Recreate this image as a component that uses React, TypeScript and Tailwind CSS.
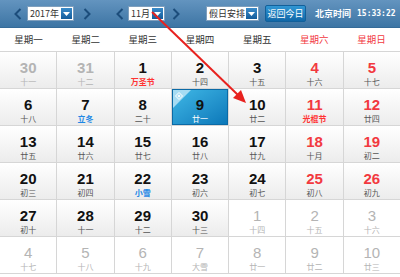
type Day = {
  n: number;
  sub: string;
  kind?: "fest" | "term";
  other?: "prev" | "next";
  sel?: boolean;
};

const ROWS: Day[][] = [
  [
    { n: 30, sub: "十一", other: "prev" },
    { n: 31, sub: "十二", other: "prev" },
    { n: 1, sub: "万圣节", kind: "fest" },
    { n: 2, sub: "十四" },
    { n: 3, sub: "十五" },
    { n: 4, sub: "十六" },
    { n: 5, sub: "十七" },
  ],
  [
    { n: 6, sub: "十八" },
    { n: 7, sub: "立冬", kind: "term" },
    { n: 8, sub: "二十" },
    { n: 9, sub: "廿一", sel: true },
    { n: 10, sub: "廿二" },
    { n: 11, sub: "光棍节", kind: "fest" },
    { n: 12, sub: "廿四" },
  ],
  [
    { n: 13, sub: "廿五" },
    { n: 14, sub: "廿六" },
    { n: 15, sub: "廿七" },
    { n: 16, sub: "廿八" },
    { n: 17, sub: "廿九" },
    { n: 18, sub: "十月" },
    { n: 19, sub: "初二" },
  ],
  [
    { n: 20, sub: "初三" },
    { n: 21, sub: "初四" },
    { n: 22, sub: "小雪", kind: "term" },
    { n: 23, sub: "初六" },
    { n: 24, sub: "初七" },
    { n: 25, sub: "初八" },
    { n: 26, sub: "初九" },
  ],
  [
    { n: 27, sub: "初十" },
    { n: 28, sub: "十一" },
    { n: 29, sub: "十二" },
    { n: 30, sub: "十三" },
    { n: 1, sub: "十四", other: "next" },
    { n: 2, sub: "十五", other: "next" },
    { n: 3, sub: "十六", other: "next" },
  ],
  [
    { n: 4, sub: "十七", other: "next" },
    { n: 5, sub: "十八", other: "next" },
    { n: 6, sub: "十九", other: "next" },
    { n: 7, sub: "大雪", other: "next" },
    { n: 8, sub: "廿一", other: "next" },
    { n: 9, sub: "廿二", other: "next" },
    { n: 10, sub: "廿三", other: "next" },
  ],
];

const WEEK = ["星期一", "星期二", "星期三", "星期四", "星期五", "星期六", "星期日"];

const CJK = { fontFamily: '"Noto Sans CJK SC", "Liberation Sans", sans-serif' };

function Chevron({ dir }: { dir: "l" | "r" }) {
  return (
    <svg width="8" height="12" viewBox="0 0 8 12" className="shrink-0">
      <polyline
        points={dir === "l" ? "6.5,1 1.5,6 6.5,11" : "1.5,1 6.5,6 1.5,11"}
        fill="none"
        stroke="#1c4d7b"
        strokeWidth="2"
      />
    </svg>
  );
}

function Select({ label, w }: { label: string; w: string }) {
  return (
    <div className={`flex h-[15px] ${w} shrink-0 items-stretch border border-[#7f9fbd] bg-white`}>
      <div className="flex flex-1 items-center whitespace-nowrap pl-[2px] text-[9px] leading-none text-[#333]">
        {label}
      </div>
      <div className="flex w-[13px] shrink-0 items-center justify-center border border-white bg-gradient-to-b from-[#3a8cca] to-[#135c9b]">
        <svg width="7" height="4" viewBox="0 0 7 4">
          <polygon points="0,0 7,0 3.5,4" fill="#fff" />
        </svg>
      </div>
    </div>
  );
}

function Cell({ d, col }: { d: Day; col: number }) {
  const weekend = col >= 5;
  let numColor = "text-[#111]";
  if (d.other) numColor = "text-[#b4b4b4]";
  else if (weekend) numColor = "text-[#f2393f]";

  let subColor = "text-[#555]";
  if (d.other) subColor = "text-[#b4b4b4]";
  else if (d.kind === "fest") subColor = "text-[#f33] font-bold";
  else if (d.kind === "term") subColor = "text-[#1e88e5] font-bold";

  if (d.sel) {
    return (
      <div className="relative flex h-[36px] flex-col items-center overflow-hidden border border-[#0b6aa6] bg-gradient-to-br from-[#3fb8e6] to-[#0a78b9] pt-[7px]">
        <div className="absolute left-0 top-0 h-0 w-0 border-r-[18px] border-t-[18px] border-r-transparent border-t-[#a6dcf3]" />
        <svg className="absolute left-[2px] top-[2px]" width="8" height="8" viewBox="0 0 8 8">
          <polygon points="4,0.5 7.5,4 4,7.5 0.5,4" fill="none" stroke="#fff" strokeWidth="1" />
          <polygon points="4,2.5 5.5,4 4,5.5 2.5,4" fill="#fff" />
        </svg>
        <div className="text-[15px] font-bold leading-[16px] text-[#111]" style={{ fontFamily: '"Liberation Sans", sans-serif' }}>
          {d.n}
        </div>
        <div className="text-[8px] leading-[12px] text-white" style={CJK}>
          {d.sub}
        </div>
      </div>
    );
  }

  return (
    <div
      className={`flex h-[36px] flex-col items-center pt-[8px] ${
        d.other === "next" ? "bg-white" : "bg-gradient-to-b from-white to-[#ececec]"
      }`}
    >
      <div
        className={`text-[15px] leading-[16px] ${d.other === "next" ? "font-normal" : "font-bold"} ${numColor}`}
        style={{ fontFamily: '"Liberation Sans", sans-serif' }}
      >
        {d.n}
      </div>
      <div className={`text-[8px] leading-[12px] ${subColor}`} style={CJK}>
        {d.sub}
      </div>
    </div>
  );
}

export default function App() {
  return (
    <div className="relative h-[277px] w-[400px] overflow-hidden bg-white" style={CJK}>
      <div className="flex h-[28px] items-center border-b border-[#356b98] bg-gradient-to-b from-[#6394bf] to-[#3d75a4]">
        <div className="ml-[14px]">
          <Chevron dir="l" />
        </div>
        <div className="ml-[5px]">
          <Select label="2017年" w="w-[47px]" />
        </div>
        <div className="ml-[9px]">
          <Chevron dir="r" />
        </div>
        <div className="ml-[25px]">
          <Chevron dir="l" />
        </div>
        <div className="ml-[4px]">
          <Select label="11月" w="w-[37px]" />
        </div>
        <div className="ml-[7px]">
          <Chevron dir="r" />
        </div>
        <div className="ml-[26px]">
          <Select label="假日安排" w="w-[53px]" />
        </div>
        <div className="ml-[6px] flex h-[17px] w-[41px] items-center justify-center whitespace-nowrap rounded-[2px] border border-[#12609a] bg-gradient-to-b from-[#3197d4] to-[#1068a8] text-[9px] leading-none text-white">
          返回今日
        </div>
        <div className="ml-[9px] whitespace-nowrap text-[9px] font-bold leading-none text-white">北京时间</div>
        <div
          className="ml-[6px] whitespace-nowrap text-[8px] font-bold leading-none text-white"
          style={{ fontFamily: '"DejaVu Sans Mono", monospace' }}
        >
          15:33:22
        </div>
      </div>

      <div className="grid h-[23px] grid-cols-7 items-center">
        {WEEK.map((w, i) => (
          <div key={w} className={`text-center text-[9.5px] ${i >= 5 ? "text-[#f2393f]" : "text-[#333]"}`}>
            {w}
          </div>
        ))}
      </div>

      <div className="grid grid-cols-7 gap-px border-y border-[#d6d6d6] bg-[#d6d6d6]">
        {ROWS.map((row, r) => row.map((d, c) => <Cell key={`${r}-${c}`} d={d} col={c} />))}
      </div>

      <svg className="pointer-events-none absolute left-0 top-0" width="400" height="277">
        <line x1="152" y1="12" x2="238" y2="95" stroke="#e8221f" strokeWidth="2" />
        <polygon points="246,103 233,98 241,90" fill="#e8221f" />
      </svg>
    </div>
  );
}
